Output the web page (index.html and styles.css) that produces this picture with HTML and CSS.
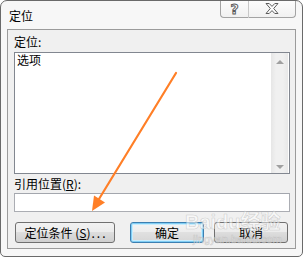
FILE: index.html
```html
<!DOCTYPE html>
<html lang="zh-CN">
<head>
  <meta charset="UTF-8">
  <title>定位</title>
  <link rel="stylesheet" href="styles.css">
</head>
<body>
  <div class="window">
    <!-- Barra de título -->
    <div class="titlebar">
      <span class="title">定位</span>
      <div class="caption-buttons">
        <div class="cap-btn help"><span class="help-glyph">?</span></div>
        <div class="cap-btn close">
          <svg width="14" height="11" viewBox="0 0 14 11">
            <path d="M1 0.5 H4.2 L7 3.4 L9.8 0.5 H13 L8.7 5.5 L13 10.5 H9.8 L7 7.6 L4.2 10.5 H1 L5.3 5.5 Z" fill="#fdfdfd" stroke="#5c5c5c" stroke-width="1" stroke-linejoin="round"/>
          </svg>
        </div>
      </div>
    </div>

    <!-- Área del diálogo -->
    <div class="client">
      <div class="label top-label">定位:</div>
      <div class="listbox">
        <div class="list-items">
          <div class="item">选项</div>
        </div>
        <div class="scrollbar">
          <div class="scroll-btn"><span class="tri up"></span></div>
          <div class="scroll-btn"><span class="tri down"></span></div>
        </div>
      </div>
      <div class="label ref-label">引用位置(<u>R</u>):</div>
      <div class="textbox"></div>
      <div class="buttons">
        <div class="btn wide">定位条件 (<u>S</u>)<span class="dots">...</span></div>
        <div class="btn default">确定</div>
        <div class="btn">取消</div>
      </div>
    </div>

    <!-- Marca de agua -->
    <div class="watermark">
      <div class="wm-big">Baidu经验</div>
      <div class="wm-small">jingyan.baidu.com</div>
    </div>

    <!-- Flecha naranja -->
    <svg class="arrow-overlay" width="303" height="257" viewBox="0 0 303 257">
      <line x1="176" y1="73" x2="99" y2="199" stroke="#ff7f27" stroke-width="2.2" stroke-linecap="round"/>
      <polygon points="92,211 94,195.5 105,202.5" fill="#ff7f27"/>
    </svg>
  </div>
</body>
</html>
```

FILE: styles.css
```css
/* Estilos generales */
body {
  margin: 0;
  padding: 0;
  font-family: "Noto Sans CJK SC", "Noto Sans", sans-serif;
  font-size: 12px;
  color: #000;
  background: #fff;
}

/* Ventana */
.window {
  position: relative;
  width: 303px;
  height: 257px;
  box-sizing: border-box;
  border: 1px solid #6a6a6a;
  border-radius: 7px 7px 5px 5px;
  background: #f7f7f7;
  padding: 0 6px 7px 6px;
  display: flex;
  flex-direction: column;
  overflow: hidden;
}

/* Barra de título */
.titlebar {
  height: 28px;
  display: flex;
  justify-content: space-between;
  align-items: flex-start;
}

.title {
  padding-left: 2px;
  margin-top: 7px;
  line-height: 16px;
  font-size: 12px;
}

.caption-buttons {
  display: flex;
  margin-top: -1px;
  height: 18px;
}

.cap-btn {
  box-sizing: border-box;
  height: 18px;
  border: 1px solid #a3a3a3;
  border-top: none;
  background: linear-gradient(#fdfdfd, #f1f1f1);
  display: flex;
  align-items: center;
  justify-content: center;
}

.help {
  width: 29px;
  border-radius: 0 0 0 4px;
  border-right-color: #c8c8c8;
}

.close {
  width: 47px;
  border-left: none;
  border-radius: 0 0 4px 0;
}

.help-glyph {
  font-family: "DejaVu Sans", sans-serif;
  font-weight: bold;
  font-size: 14px;
  line-height: 14px;
  color: #fdfdfd;
  -webkit-text-stroke: 1px #5c5c5c;
}

/* Área cliente */
.client {
  flex: 1;
  border: 1px solid #9b9b9b;
  background: #f0f0f0;
  padding: 0 5px 0 6px;
  display: flex;
  flex-direction: column;
}

.label {
  white-space: nowrap;
}

.label u {
  text-underline-offset: 1px;
}

.top-label {
  height: 22px;
  box-sizing: border-box;
  padding-top: 4px;
  line-height: 16px;
}

/* Lista */
.listbox {
  height: 122px;
  box-sizing: border-box;
  border: 1px solid #828790;
  background: #fff;
  display: flex;
}

.list-items {
  flex: 1;
}

.item {
  padding-left: 2px;
  line-height: 14px;
}

.scrollbar {
  width: 17px;
  margin-right: 1px;
  background: linear-gradient(90deg, #e6e6e6, #f0f0f0 30%, #f0f0f0 70%, #e8e8e8);
  display: flex;
  flex-direction: column;
  justify-content: space-between;
}

.scroll-btn {
  height: 17px;
  display: flex;
  align-items: center;
  justify-content: center;
}

.tri {
  width: 0;
  height: 0;
  border-left: 4px solid transparent;
  border-right: 4px solid transparent;
}

.tri.up {
  border-bottom: 4px solid #a0a0a0;
}

.tri.down {
  border-top: 4px solid #a0a0a0;
  margin-top: 4px;
}

.ref-label {
  height: 19px;
  line-height: 19px;
}

/* Cuadro de texto */
.textbox {
  height: 19px;
  box-sizing: border-box;
  border: 1px solid #abadb3;
  border-top-color: #a3a6ad;
  background: #fff;
}

/* Botones */
.buttons {
  display: flex;
  margin-top: 10px;
  padding-left: 1px;
}

.btn {
  width: 74px;
  height: 21px;
  box-sizing: border-box;
  border: 1px solid #707070;
  border-radius: 3px;
  background: linear-gradient(#f2f2f2 0%, #ebebeb 50%, #dddddd 50%, #cfcfcf 100%);
  display: flex;
  align-items: center;
  justify-content: center;
  line-height: 19px;
  white-space: nowrap;
}

.btn.wide {
  width: 100px;
  margin-right: 15px;
}

.dots {
  letter-spacing: 2px;
  margin-left: 1px;
  margin-right: -2px;
}

.btn.default {
  margin-right: 10px;
  border-color: #3c7fb1;
  box-shadow: inset 0 0 0 1px #7fcdf4, inset 0 0 0 2px #c8ecfd;
  background: linear-gradient(#f4f4f4 0%, #ececec 50%, #e0e0e0 50%, #d6d6d6 100%);
}

/* Marca de agua */
.watermark {
  position: absolute;
  left: 184px;
  top: 210px;
  color: rgba(255, 255, 255, 0.55);
  -webkit-text-stroke: 0.6px rgba(160, 160, 160, 0.45);
  font-family: "Liberation Sans", "Noto Sans CJK SC", sans-serif;
  pointer-events: none;
}

.wm-big {
  font-size: 20px;
  font-weight: bold;
  line-height: 22px;
}

.wm-small {
  font-size: 11px;
  line-height: 12px;
  padding-left: 8px;
}

/* Flecha */
.arrow-overlay {
  position: absolute;
  left: -1px;
  top: -1px;
  pointer-events: none;
}
```
